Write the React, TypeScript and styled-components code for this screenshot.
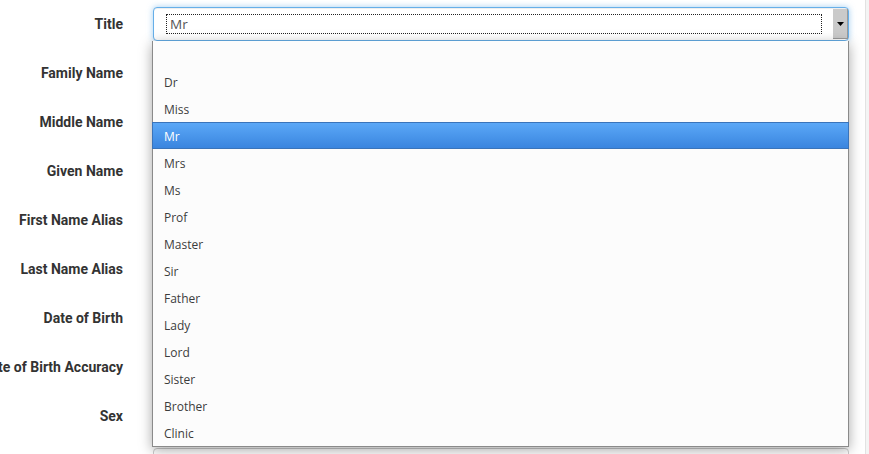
import React from 'react';
import styled, { createGlobalStyle } from 'styled-components';

const fields = [
  'Family Name',
  'Middle Name',
  'Given Name',
  'First Name Alias',
  'Last Name Alias',
  'Date of Birth',
  'Date of Birth Accuracy',
  'Sex',
  'Country of Birth',
];

const titles = ['', 'Dr', 'Miss', 'Mr', 'Mrs', 'Ms', 'Prof', 'Master', 'Sir', 'Father', 'Lady', 'Lord', 'Sister', 'Brother', 'Clinic'];

const GlobalStyle = createGlobalStyle`
  html, body {
    margin: 0;
    padding: 0;
    background: #f4f4f4;
    overflow: hidden;
  }
`;

const App: React.FC = () => {
  const selected = 'Mr';
  return (
    <>
      <GlobalStyle />
      <Page>
        <Form>
          <Row>
            <Label>
              <LabelText>Title</LabelText>
            </Label>
            <Field>
              <Select>
                <FocusRing>{selected}</FocusRing>
                <ArrowButton>
                  <svg width="7" height="4" viewBox="0 0 7 4">
                    <path d="M0 0h7L3.5 4z" fill="#000" />
                  </svg>
                </ArrowButton>
              </Select>
              <Menu>
                {titles.map((title) => (
                  <MenuItem key={title || 'empty'} $active={title === selected}>
                    {title}
                  </MenuItem>
                ))}
              </Menu>
            </Field>
          </Row>
          {fields.map((field) => (
            <Row key={field}>
              <Label>
                <LabelText>{field}</LabelText>
              </Label>
              <Field>
                <Input />
              </Field>
            </Row>
          ))}
        </Form>
      </Page>
    </>
  );
};

const Page = styled.div`
  width: 865px;
  height: 454px;
  background: #fff;
  border-right: 1px solid #e2e2e2;
  overflow: hidden;
`;

const Form = styled.div`
  padding-top: 7px;
  display: flex;
  flex-direction: column;
  row-gap: 15px;
`;

const Row = styled.div`
  display: grid;
  grid-template-columns: 123px 696px;
  column-gap: 30px;
  align-items: center;
`;

const Label = styled.div`
  display: flex;
  justify-content: flex-end;
  height: 34px;
  align-items: center;
  min-width: 0;
`;

const LabelText = styled.span`
  font-family: Roboto, "Liberation Sans", sans-serif;
  font-weight: bold;
  font-size: 14px;
  color: #333;
  white-space: nowrap;
  flex-shrink: 0;
`;

const Field = styled.div`
  position: relative;
  height: 34px;
`;

const Input = styled.div`
  box-sizing: border-box;
  height: 34px;
  border: 1px solid #ccc;
  border-radius: 4px;
  background: #fff;
`;

const Select = styled.div`
  box-sizing: border-box;
  height: 34px;
  border: 1px solid #66afe9;
  border-radius: 4px;
  background: #fff;
  box-shadow: inset 0 1px 1px rgba(0, 0, 0, 0.075), 0 0 6px rgba(102, 175, 233, 0.6);
  display: flex;
  align-items: center;
  padding: 1px 0 1px 12px;
`;

const FocusRing = styled.div`
  flex: 1;
  height: 18px;
  border: 1px dotted #222;
  font-family: "Open Sans", "Noto Sans", sans-serif;
  font-size: 13.5px;
  line-height: 18px;
  color: #555;
  padding-left: 3px;
  margin-right: 11px;
`;

const ArrowButton = styled.div`
  box-sizing: border-box;
  width: 15px;
  height: 30px;
  background: #cacaca;
  border-right: 1px solid #9a9a9a;
  border-bottom: 1px solid #9a9a9a;
  display: flex;
  align-items: center;
  justify-content: center;
`;

const Menu = styled.div`
  position: absolute;
  top: 34px;
  left: -1px;
  width: 697px;
  box-sizing: border-box;
  background: #fcfcfc;
  border: 1px solid #8a8a8a;
  border-top: none;
  box-shadow: 0 3px 12px rgba(0, 0, 0, 0.35);
  z-index: 10;
`;

const MenuItem = styled.div<{ $active?: boolean }>`
  box-sizing: border-box;
  height: 27px;
  padding: 2px 0 0 11px;
  display: flex;
  align-items: center;
  font-family: "Open Sans", "Noto Sans", sans-serif;
  font-size: 12px;
  color: ${(p) => (p.$active ? '#fff' : '#3c3c3c')};
  background: ${(p) => (p.$active ? 'linear-gradient(#5ba8f7, #3a85df)' : 'transparent')};
  border: 1px solid ${(p) => (p.$active ? '#3a74ba' : 'transparent')};
  margin: 0 -1px;
`;

export default App;
